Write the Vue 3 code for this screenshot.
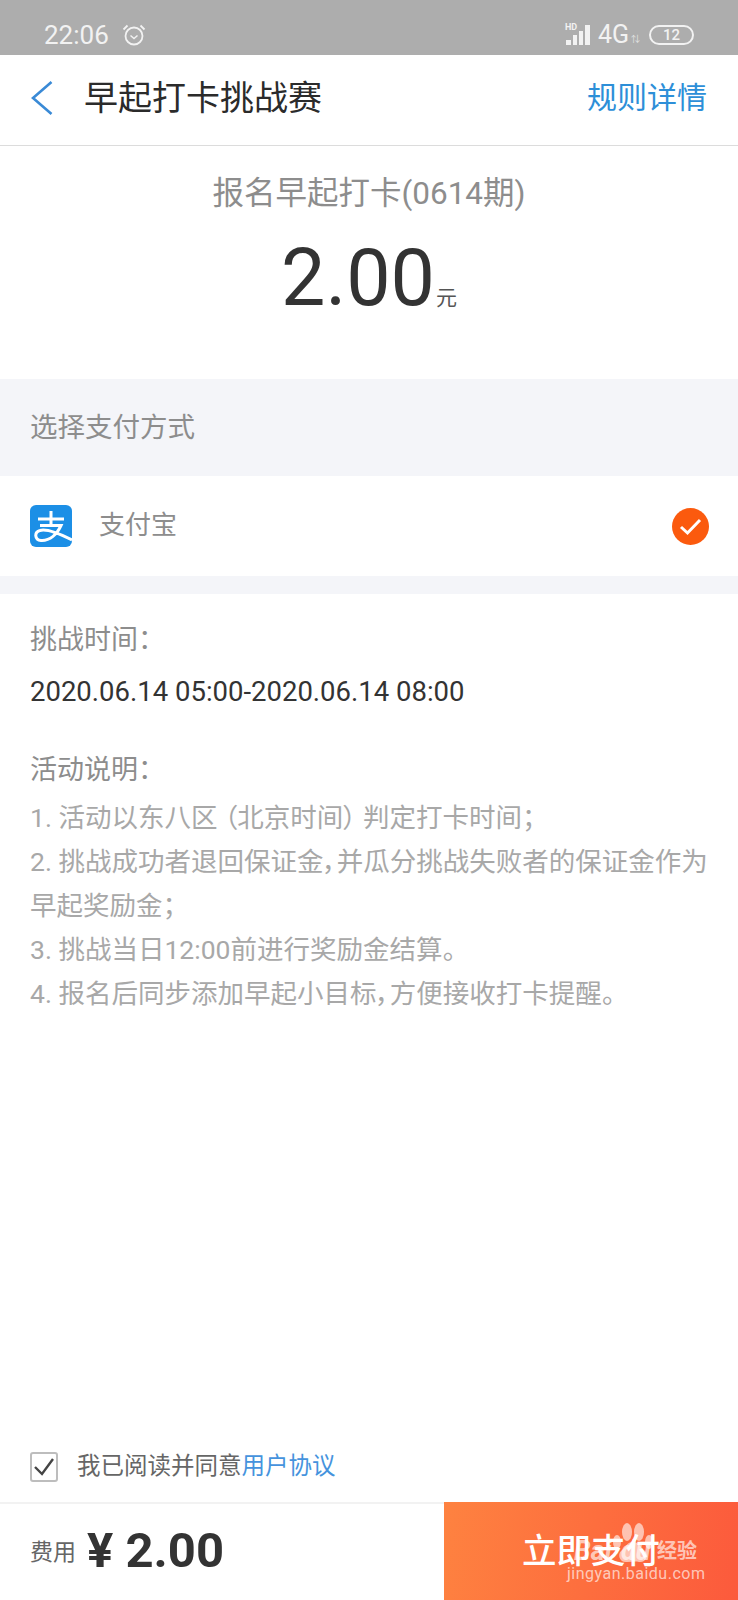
<template>
  <div class="page">
    <div class="status">
      <div class="st-left">
        <span class="time">22:06</span>
        <svg class="alarm" width="24" height="24" viewBox="0 0 24 24" fill="none" stroke="#f2f2f2" stroke-width="1.8">
          <circle cx="12" cy="13" r="8.5" />
          <path d="M8.500 12.500l3.500 3 3.500-3" stroke-width="1.500" />
          <path d="M1.500 6.500L5.500 2.500M22.500 6.500L18.500 2.500" />
        </svg>
      </div>
      <div class="st-right">
        <div class="sig">
          <span class="hd">HD</span>
          <svg class="signal" width="28" height="20" viewBox="0 0 28 20" fill="#f2f2f2">
            <rect x="1" y="15" width="5" height="5" />
            <rect x="8" y="10" width="4" height="10" />
            <rect x="14" y="6" width="4" height="14" />
            <rect x="20" y="0" width="5" height="20" />
          </svg>
        </div>
        <span class="net">4G</span>
        <span class="arrows">⇅</span>
        <span class="batt"><span>12</span></span>
      </div>
    </div>

    <header class="nav">
      <svg class="back" width="24" height="36" viewBox="0 0 24 36" fill="none" stroke="#3a8ad6" stroke-width="2.600">
        <path d="M21.500 2L3 18l18.500 16" />
      </svg>
      <h1>早起打卡挑战赛</h1>
      <a class="rules">规则详情</a>
    </header>

    <section class="amount">
      <p class="sub">报名早起打卡(0614期)</p>
      <p class="money"><span class="num">2.00</span><span class="unit">元</span></p>
    </section>

    <div class="band"><span>选择支付方式</span></div>

    <div class="pay">
      <svg class="ali" width="42" height="42" viewBox="0 0 42 42">
        <rect width="42" height="42" rx="6" fill="#1c8fe6" />
        <path d="M8 14H34M21 6V20M10 20.500H31C27 29 20 36 11 35.500C4.500 35 4 27 10 25.500C17 23.500 28 28 42 35" fill="none" stroke="#fff" stroke-width="3" />
      </svg>
      <span class="pay-name">支付宝</span>
      <svg class="check" width="37" height="37" viewBox="0 0 37 37">
        <circle cx="18.500" cy="18.500" r="18.500" fill="#fb5a0e" />
        <path d="M9 19l6.500 6L28 12" fill="none" stroke="#fff" stroke-width="3" />
      </svg>
    </div>

    <div class="thin"></div>

    <section class="info">
      <p class="label">挑战时间：</p>
      <p class="range">2020.06.14 05:00-2020.06.14 08:00</p>
      <p class="label second">活动说明：</p>
      <ol class="rules-list">
        <li>1. 活动以东八区 （北京时间） 判定打卡时间；</li>
        <li>2. 挑战成功者退回保证金，并瓜分挑战失败者的保证金作为早起奖励金；</li>
        <li>3. 挑战当日12:00前进行奖励金结算。</li>
        <li>4. 报名后同步添加早起小目标，方便接收打卡提醒。</li>
      </ol>
    </section>

    <div class="agree">
      <svg class="box" width="28" height="30" viewBox="0 0 28 30" fill="none">
        <rect x="1" y="1" width="26" height="28" rx="2" stroke="#bdbdbd" stroke-width="2" />
        <path d="M5 15l7 7L23 7" stroke="#444" stroke-width="2.400" />
      </svg>
      <span class="agree-text">我已阅读并同意<span class="link">用户协议</span></span>
    </div>

    <footer class="bottom">
      <div class="fee">
        <span class="fee-label">费用</span>
        <span class="fee-val">¥ 2.00</span>
      </div>
      <div class="paybtn">
        <span class="paytext">立即支付</span>
        <div class="wm">
          <span class="wm-bai">Bai</span>
          <span class="wm-du">du</span>
          <span class="wm-jy">经验</span>
          <span class="wm-url">jingyan.baidu.com</span>
          <svg class="paw" width="46" height="42" viewBox="0 0 46 42" fill="#ffffff" opacity="0.6">
            <ellipse cx="17" cy="10" rx="5" ry="9" />
            <ellipse cx="29" cy="10" rx="5" ry="9" />
            <ellipse cx="7" cy="20" rx="4" ry="7" />
            <ellipse cx="39" cy="20" rx="4" ry="7" />
            <path d="M23 20c-6 0-7 5-12 9-4 4-1 12 6 11 4 0 8-1 12 0 7 1 10-7 6-11-5-4-6-9-12-9z" />
          </svg>
        </div>
      </div>
    </footer>
  </div>
</template>

<script setup>
</script>

<style>
html, body { margin: 0; background: #fff; }
</style>

<style scoped>
.page {
  width: 738px;
  height: 1600px;
  display: flex;
  flex-direction: column;
  background: #fff;
  font-family: Roboto, "Noto Sans CJK SC", sans-serif;
  font-feature-settings: "palt";
  overflow: hidden;
}
p, h1, ol { margin: 0; padding: 0; font-weight: 400; }
.status {
  height: 55px;
  flex: none;
  background: #adadad;
  display: flex;
  justify-content: space-between;
  align-items: center;
  padding: 14px 44px 0 44px;
  box-sizing: border-box;
  color: #f2f2f2;
}
.st-left { display: flex; align-items: center; gap: 13px; }
.time { font-size: 26px; line-height: 30px; }
.st-right { display: flex; align-items: center; }
.sig { position: relative; width: 28px; height: 20px; }
.signal { display: block; }
.hd { position: absolute; left: 0; top: -2px; font-size: 9px; line-height: 9px; font-weight: 700; }
.net { font-size: 25px; line-height: 30px; margin-left: 5px; }
.arrows { font-size: 9px; margin: 8px 9px 0 2px; width: 9px; opacity: .8; }
.batt {
  width: 45px;
  height: 20px;
  box-sizing: border-box;
  border: 2px solid #f2f2f2;
  border-radius: 10px;
  display: flex;
  align-items: center;
  justify-content: center;
  font-size: 15px;
  font-weight: 500;
}
.nav {
  height: 91px;
  flex: none;
  box-sizing: border-box;
  border-bottom: 1px solid #dcdcdc;
  display: flex;
  align-items: center;
  padding: 0 31px 4px 30px;
}
.back { flex: none; }
.nav h1 { font-size: 34px; color: #2b2b2b; margin-left: 30px; flex: 1; line-height: 48px; }
.rules { font-size: 30px; line-height: 48px; color: #2d8fd8; }
.amount {
  height: 233px;
  flex: none;
  display: flex;
  flex-direction: column;
  align-items: center;
  box-sizing: border-box;
  padding-top: 26px;
}
.sub { font-size: 31.500px; line-height: 44px; color: #8d8d8d; }
.money { display: flex; align-items: baseline; margin-top: 12px; color: #333; }
.num { font-size: 79px; line-height: 100px; }
.unit { font-size: 21px; color: #555; margin-left: 1px; }
.band {
  height: 97px;
  flex: none;
  background: #f4f5f9;
  display: flex;
  align-items: center;
  padding: 0 0 5px 30px;
  box-sizing: border-box;
  font-size: 27.500px;
  color: #8d8d8d;
}
.pay {
  height: 100px;
  flex: none;
  display: flex;
  align-items: center;
  padding: 0 29px 0 30px;
}
.pay-name { font-size: 26px; color: #8d8d8d; margin: 0 0 2px 27px; flex: 1; line-height: 36px; }
.thin { height: 18px; flex: none; background: #f4f5f9; }
.info { padding: 20px 30px 0; flex: 1; }
.label { font-size: 27px; line-height: 52px; color: #8d8d8d; }
.range { font-size: 27.500px; line-height: 52px; color: #333; }
.second { margin-top: 26px; }
.rules-list { list-style: none; font-size: 26.500px; line-height: 44px; color: #a8a8a8; }
.agree { display: flex; align-items: center; padding: 0 30px 4px; height: 66px; flex: none; box-sizing: border-box; }
.agree-text { font-size: 23.500px; color: #666; margin: 0 0 3px 19px; line-height: 34px; }
.link { color: #4593dd; }
.bottom {
  height: 98px;
  flex: none;
  display: flex;
  border-top: 2px solid #f2f2f2;
  box-sizing: border-box;
}
.fee { width: 444px; display: flex; align-items: center; padding: 0 0 4px 30px; box-sizing: border-box; }
.fee-label { font-size: 23px; color: #666; }
.fee-val { font-weight: 700; font-size: 49px; color: #333; margin-left: 11px; white-space: pre; }
.paybtn {
  flex: 1;
  position: relative;
  background: linear-gradient(100deg, #fe8240, #fc5a3c);
  display: flex;
  align-items: center;
  justify-content: center;
  margin-top: -2px;
}
.paytext { color: #fff; font-size: 34.500px; font-weight: 500; margin: 0 0 6px 0; }
.wm { position: absolute; left: 0; top: 0; width: 100%; height: 100%; color: rgba(255,255,255,.65); white-space: nowrap; }
.wm-bai, .wm-du, .wm-jy, .wm-url { position: absolute; }
.wm-bai, .wm-du { top: 33px; font-size: 27px; line-height: 32px; font-weight: 700; font-style: italic; }
.wm-bai { left: 130px; }
.wm-du { left: 177px; }
.wm-jy { left: 213px; top: 33px; font-size: 20px; line-height: 32px; font-weight: 700; }
.wm-url { left: 123px; top: 63px; font-size: 16px; line-height: 18px; letter-spacing: .5px; }
.paw { position: absolute; left: 166px; top: 20px; }
</style>
